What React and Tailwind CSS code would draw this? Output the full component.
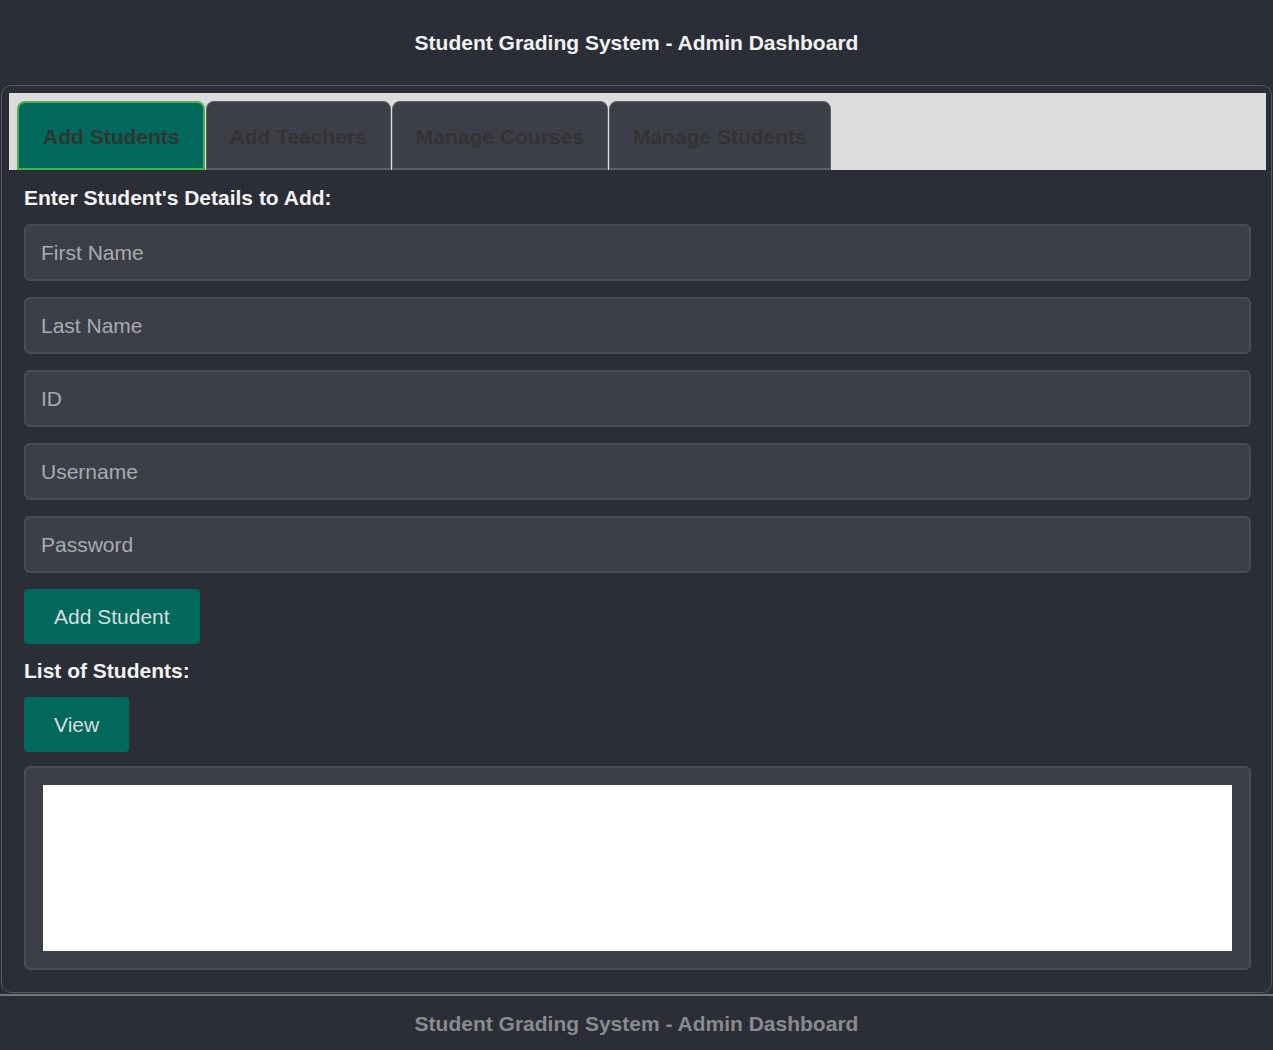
import { useState } from 'react'

const TABS = ['Add Students', 'Add Teachers', 'Manage Courses', 'Manage Students']
const FIELDS = ['First Name', 'Last Name', 'ID', 'Username', 'Password']

export default function App() {
  const [tab, setTab] = useState(0)

  return (
    <div className="min-h-screen bg-[#2c2e37] text-[21px] leading-[24px] text-[#f2f2f2]" style={{ fontFamily: '"Liberation Sans", Arial, sans-serif' }}>
      {/* Header */}
      <header className="pt-[31px] pb-[30px] text-center font-bold">
        Student Grading System - Admin Dashboard
      </header>

      {/* Main panel */}
      <main className="ml-px mr-px rounded-[10px] border border-[#585a60] pl-[7px] pr-[5px] pt-[7px] pb-[22px]">
        {/* Tab bar */}
        <div className="flex gap-[1px] bg-[#dcdcdc] px-[8px] pt-[8px]">
          {TABS.map((t, i) => (
            <button
              key={t}
              onClick={() => setTab(i)}
              className={
                i === tab
                  ? 'rounded-t-[8px] border-2 border-[#4caf50] bg-[#00695c] pl-[24px] pr-[23px] pt-[22px] pb-[19px] font-bold text-[#333333]'
                  : 'rounded-t-[8px] border border-b-2 border-[#5e6066] bg-[#3c3f48] px-[23px] pt-[23px] pb-[19px] font-bold text-[#333333]'
              }
            >
              {t}
            </button>
          ))}
        </div>

        {/* Form */}
        <div className="px-[15px] pt-[16px]">
          <p className="font-bold">Enter Student's Details to Add:</p>
          <div className="mt-[14px] flex flex-col gap-[16px]">
            {FIELDS.map(f => (
              <input
                key={f}
                type={f === 'Password' ? 'password' : 'text'}
                placeholder={f}
                className="h-[57px] w-full rounded-[6px] border-2 border-[#4a4c53] bg-[#3c3f48] px-[15px] text-[21px] text-[#dddddd] outline-none placeholder:text-[#a9abb0]"
              />
            ))}
          </div>

          <button className="mt-[16px] h-[55px] rounded-[4px] bg-[#00695c] px-[30px] text-[#d9dcdc]">
            Add Student
          </button>

          <p className="mt-[15px] font-bold">List of Students:</p>

          <button className="mt-[14px] h-[55px] rounded-[4px] bg-[#00695c] px-[30px] text-[#d9dcdc]">
            View
          </button>

          <div className="mt-[14px] rounded-[6px] border-2 border-[#4a4c53] bg-[#3c3f48] p-[17px]">
            <div className="h-[166px] bg-white" />
          </div>
        </div>
      </main>

      {/* Footer */}
      <footer className="mt-px border-t-2 border-[#75777c] pt-[16px] pb-[20px] text-center font-bold text-[#8a8b8f]">
        Student Grading System - Admin Dashboard
      </footer>
    </div>
  )
}
